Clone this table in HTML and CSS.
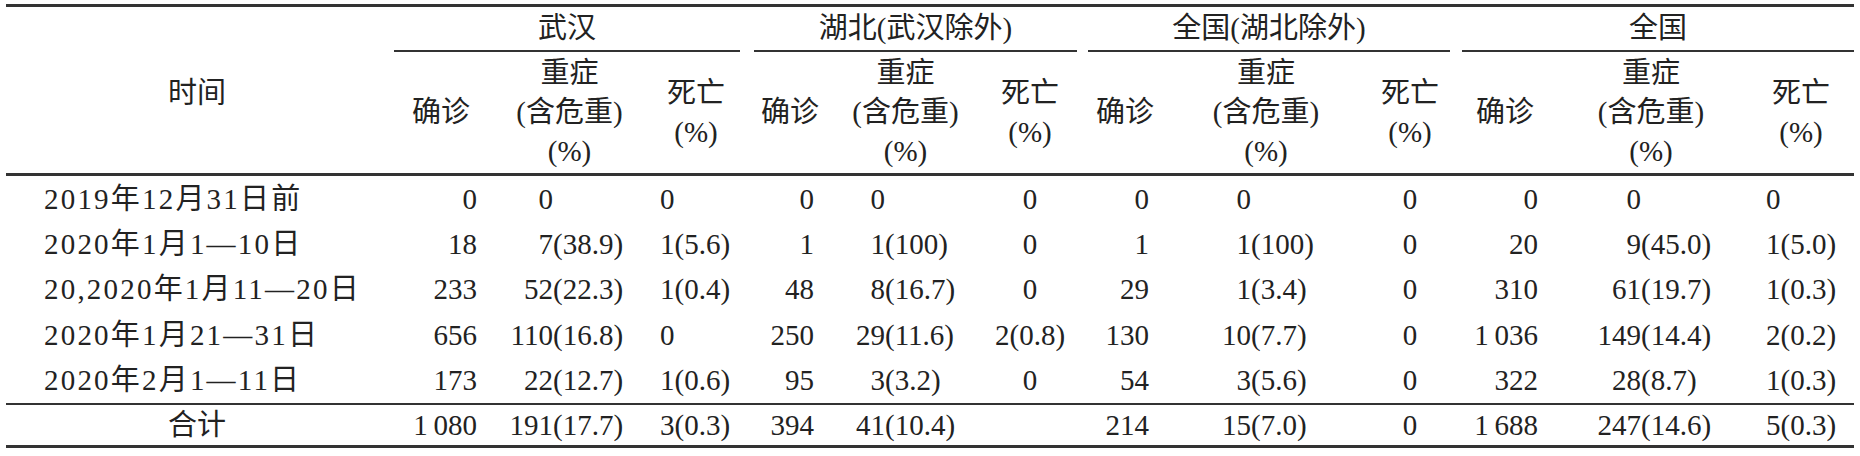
FILE: index.html
```html
<!DOCTYPE html>
<html lang="zh">
<head>
<meta charset="utf-8">
<title>表</title>
<link rel="stylesheet" href="styles.css">
</head>
<body>
<div class="page">
<table class="tbl">
  <colgroup>
    <col style="width:382px">
    <col style="width:106px"><col style="width:151px"><col style="width:102px">
    <col style="width:86px"><col style="width:145px"><col style="width:104px">
    <col style="width:86px"><col style="width:196px"><col style="width:92px">
    <col style="width:98px"><col style="width:194px"><col style="width:106px">
  </colgroup>
  <thead>
    <tr class="grp-row">
      <th class="time-h" rowspan="2">时间</th>
      <th colspan="3" class="gh"><div class="grp g1">武汉</div></th>
      <th colspan="3" class="gh"><div class="grp g2">湖北(武汉除外)</div></th>
      <th colspan="3" class="gh"><div class="grp g3">全国(湖北除外)</div></th>
      <th colspan="3" class="gh"><div class="grp g4">全国</div></th>
    </tr>
    <tr class="sub-row">
      <th>确诊</th><th>重症<br>(含危重)<br>(%)</th><th>死亡<br>(%)</th>
      <th>确诊</th><th>重症<br>(含危重)<br>(%)</th><th>死亡<br>(%)</th>
      <th>确诊</th><th>重症<br>(含危重)<br>(%)</th><th>死亡<br>(%)</th>
      <th>确诊</th><th>重症<br>(含危重)<br>(%)</th><th>死亡<br>(%)</th>
    </tr>
  </thead>
  <tbody>
    <tr>
      <td class="t">2019年12月31日前</td>
      <td class="c1">0</td><td class="s1"><span class="n">0</span></td><td class="d1">0</td>
      <td class="c2">0</td><td class="s2"><span class="n">0</span></td><td class="d2">0</td>
      <td class="c3">0</td><td class="s3"><span class="n">0</span></td><td class="d3">0</td>
      <td class="c4">0</td><td class="s4"><span class="n">0</span></td><td class="d4">0</td>
    </tr>
    <tr>
      <td class="t">2020年1月1—10日</td>
      <td class="c1">18</td><td class="s1"><span class="n">7</span>(38.9)</td><td class="d1">1(5.6)</td>
      <td class="c2">1</td><td class="s2"><span class="n">1</span>(100)</td><td class="d2">0</td>
      <td class="c3">1</td><td class="s3"><span class="n">1</span>(100)</td><td class="d3">0</td>
      <td class="c4">20</td><td class="s4"><span class="n">9</span>(45.0)</td><td class="d4">1(5.0)</td>
    </tr>
    <tr>
      <td class="t">20,2020年1月11—20日</td>
      <td class="c1">233</td><td class="s1"><span class="n">52</span>(22.3)</td><td class="d1">1(0.4)</td>
      <td class="c2">48</td><td class="s2"><span class="n">8</span>(16.7)</td><td class="d2">0</td>
      <td class="c3">29</td><td class="s3"><span class="n">1</span>(3.4)</td><td class="d3">0</td>
      <td class="c4">310</td><td class="s4"><span class="n">61</span>(19.7)</td><td class="d4">1(0.3)</td>
    </tr>
    <tr>
      <td class="t">2020年1月21—31日</td>
      <td class="c1">656</td><td class="s1"><span class="n">110</span>(16.8)</td><td class="d1">0</td>
      <td class="c2">250</td><td class="s2"><span class="n">29</span>(11.6)</td><td class="d2">2(0.8)</td>
      <td class="c3">130</td><td class="s3"><span class="n">10</span>(7.7)</td><td class="d3">0</td>
      <td class="c4">1&#8201;036</td><td class="s4"><span class="n">149</span>(14.4)</td><td class="d4">2(0.2)</td>
    </tr>
    <tr>
      <td class="t">2020年2月1—11日</td>
      <td class="c1">173</td><td class="s1"><span class="n">22</span>(12.7)</td><td class="d1">1(0.6)</td>
      <td class="c2">95</td><td class="s2"><span class="n">3</span>(3.2)</td><td class="d2">0</td>
      <td class="c3">54</td><td class="s3"><span class="n">3</span>(5.6)</td><td class="d3">0</td>
      <td class="c4">322</td><td class="s4"><span class="n">28</span>(8.7)</td><td class="d4">1(0.3)</td>
    </tr>
    <tr class="total">
      <td class="tt">合计</td>
      <td class="c1">1&#8201;080</td><td class="s1"><span class="n">191</span>(17.7)</td><td class="d1">3(0.3)</td>
      <td class="c2">394</td><td class="s2"><span class="n">41</span>(10.4)</td><td class="d2"></td>
      <td class="c3">214</td><td class="s3"><span class="n">15</span>(7.0)</td><td class="d3">0</td>
      <td class="c4">1&#8201;688</td><td class="s4"><span class="n">247</span>(14.6)</td><td class="d4">5(0.3)</td>
    </tr>
  </tbody>
</table>
</div>
</body>
</html>
```

FILE: styles.css
```css
html, body {
  margin: 0;
  padding: 0;
  background: #ffffff;
}

.page {
  padding: 4px 0 0 6px;
}

.tbl {
  width: 1848px;
  table-layout: fixed;
  border-collapse: separate;
  border-spacing: 0;
  border-top: 3px solid #333333;
  border-bottom: 3px solid #333333;
  font-family: "Liberation Serif", "Noto Sans CJK SC", serif;
  font-size: 29px;
  color: #222222;
}

.tbl th {
  font-weight: normal;
  padding: 0;
  text-align: center;
  vertical-align: middle;
}

.time-h {
  border-bottom: 3px solid #333333;
}

.gh {
  height: 45px;
}

.grp {
  height: 43px;
  line-height: 43px;
  border-bottom: 2px solid #333333;
  white-space: nowrap;
}

.g1 { margin: 0 7px 0 6px; }
.g2 { margin: 0 5px 0 7px; }
.g3 { margin: 0 6px 0 6px; }
.g4 { margin: 0 0 0 6px; }

.sub-row th {
  height: 121px;
  line-height: 39px;
  border-bottom: 3px solid #333333;
  white-space: nowrap;
}

.tbl td {
  height: 45.4px;
  padding: 0;
  line-height: 32px;
  vertical-align: middle;
  white-space: nowrap;
}

.total td {
  height: 40px;
  border-top: 2px solid #333333;
}

.t {
  text-align: left;
  padding-left: 38px !important;
  letter-spacing: 2.2px;
}

.tt {
  text-align: center;
}

.n {
  display: inline-block;
  width: 45px;
  text-align: right;
}

.c1 { text-align: right; padding-right: 17px !important; }
.s1 { text-align: left; padding-left: 14px !important; }
.d1 { text-align: left; padding-left: 15px !important; }

.c2 { text-align: right; padding-right: 19px !important; }
.s2 { text-align: left; padding-left: 7px !important; }
.d2 { text-align: center; }

.c3 { text-align: right; padding-right: 19px !important; }
.s3 { text-align: left; padding-left: 38px !important; }
.d3 { text-align: center; }

.c4 { text-align: right; padding-right: 16px !important; }
.s4 { text-align: left; padding-left: 42px !important; }
.d4 { text-align: left; padding-left: 18px !important; }
```
